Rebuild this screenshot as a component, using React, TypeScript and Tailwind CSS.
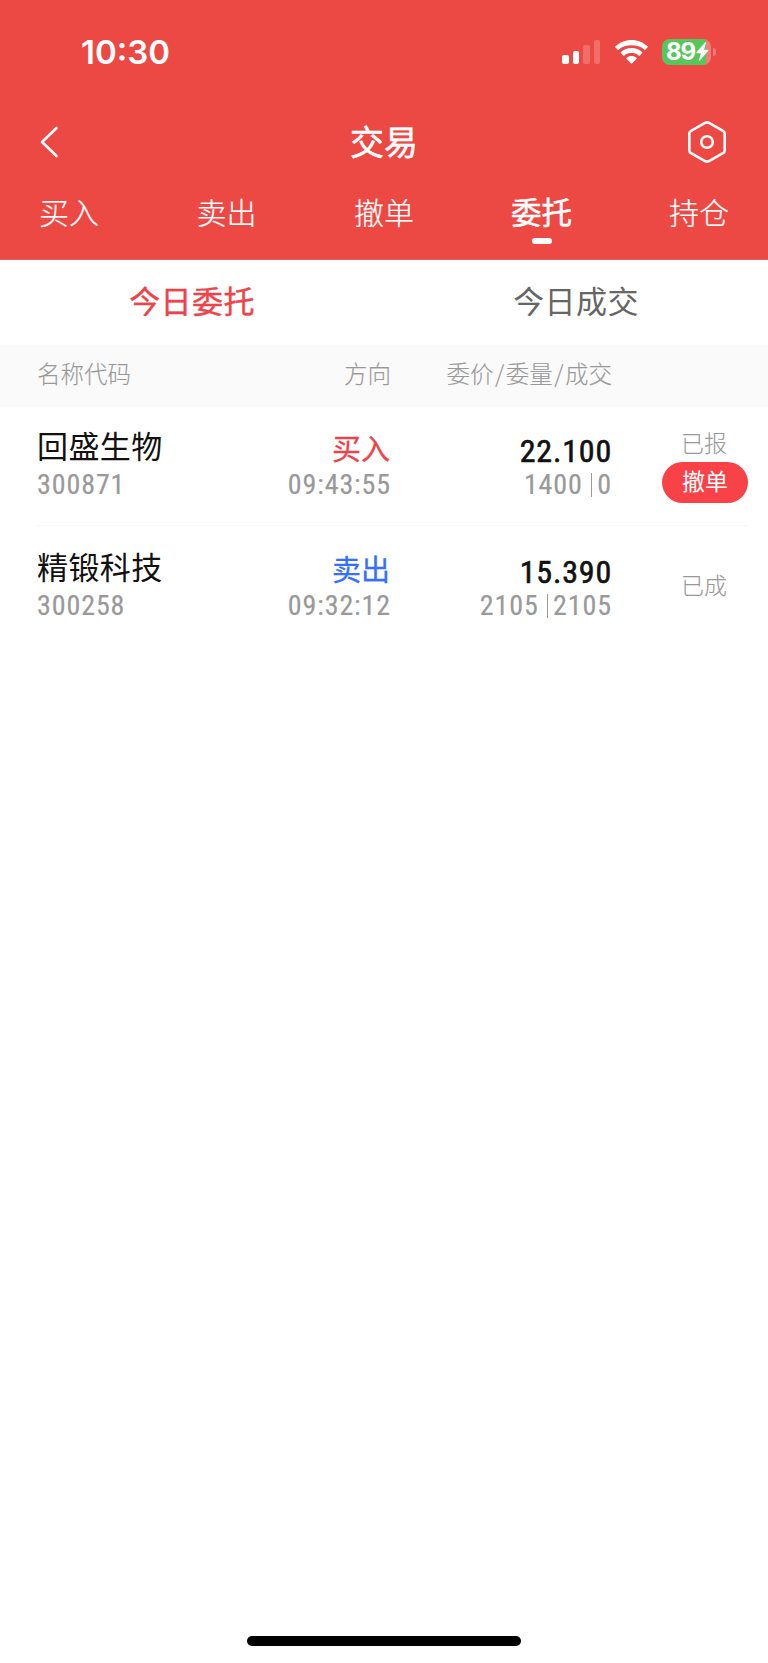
import React, { useState } from 'react';

const orders = [
  { name: '回盛生物', code: '300871', side: 'buy', time: '09:43:55', price: '22.100', amount: '1400', filled: '0', status: '已报', cancelable: true },
  { name: '精锻科技', code: '300258', side: 'sell', time: '09:32:12', price: '15.390', amount: '2105', filled: '2105', status: '已成', cancelable: false },
];

const tabs = ['买入', '卖出', '撤单', '委托', '持仓'];

// Condensed grey digits shared by the second line of each column
const digits = "font-['Roboto_Condensed',Roboto,sans-serif] text-[28px] leading-[34px] tracking-[0.9px] text-[#999] [-webkit-text-stroke:0.2px]";

const StatusBar: React.FC = () => (
  <div className="flex h-[103px] items-center justify-between pl-[81px] pr-[52px]">
    <div className="pt-px font-[Inter,sans-serif] text-[33px] leading-none font-semibold">10:30</div>
    <div className="flex items-center">
      {/* Signal */}
      <div className="flex h-6 items-end gap-[4px]">
        <div className="h-[9px] w-[6.5px] rounded-[2px] bg-white" />
        <div className="h-[13px] w-[6.5px] rounded-[2px] bg-white" />
        <div className="h-[19px] w-[6.5px] rounded-[2px] bg-white/20" />
        <div className="h-6 w-[6.5px] rounded-[2px] bg-white/20" />
      </div>
      {/* Wifi */}
      <svg className="ml-[15px] h-6 w-[33px]" viewBox="0 0 33 24" fill="#fff">
        <path d="M16.500 0C10.300 0 4.700 2.400.5 6.300c-.4.400-.4.900 0 1.300l2 2c.4.400.9.400 1.300 0 3.400-3.100 7.900-4.300 12.700-4.300s9.300 1.200 12.700 4.300c.4.400.9.400 1.300 0l2-2c.4-.4.400-.9 0-1.300C28.300 2.400 22.700 0 16.500 0z" />
        <path d="M16.500 8c-4 0-7.700 1.500-10.500 4-.4.400-.4.900 0 1.300l2.100 2.100c.4.400.9.400 1.300 0 1.900-1.700 4.400-2.300 7.100-2.300s5.200.6 7.100 2.300c.4.400.9.400 1.300 0l2.100-2.100c.4-.4.400-.9 0-1.300-2.800-2.500-6.500-4-10.500-4z" />
        <path d="M16.500 16c-1.900 0-3.600.6-4.900 1.700-.4.400-.4.900 0 1.300l4.200 4.300c.4.400 1 .4 1.400 0l4.200-4.300c.4-.4.400-.9 0-1.300-1.300-1.100-3-1.700-4.900-1.700z" />
      </svg>
      {/* Battery */}
      <div className="ml-[14px] flex h-[26px] w-[49px] items-center rounded-[8px] bg-linear-to-r from-[#56c85b] from-90% to-[#f27c79] to-90% pl-[4px]">
        <span className="font-[Inter,sans-serif] text-[24px] leading-none font-bold tracking-[-1px]">89</span>
        <svg className="ml-px h-[19px] w-[13px] shrink-0" viewBox="0 0 13 19" fill="#fff">
          <path d="M9 .5.500 10.200c-.4.500-.2 1 .5 1h3.900L2.900 18c-.2.800.4 1.100.9.500l8.500-9.700c.4-.5.200-1-.5-1H8l2-6.800C10.200.200 9.500-.1 9 .500z" />
        </svg>
      </div>
      <div className="ml-[2px] h-[8px] w-[3px] rounded-r-full bg-white/25" />
    </div>
  </div>
);

const App: React.FC = () => {
  const [activeTab, setActiveTab] = useState('委托');
  const [view, setView] = useState('orders');

  return (
    <div className="flex h-[1663px] w-[768px] flex-col bg-white font-['Noto_Sans_CJK_SC',sans-serif]">
      {/* Header */}
      <header className="h-[260px] border-b border-[#d9605b] bg-[#ed4944] text-white">
        <StatusBar />
        <div className="flex h-[78px] items-center justify-between pr-[42px] pl-[40px]">
          <svg className="h-8 w-[38px]" viewBox="0 0 38 32" fill="none" stroke="#fff" strokeWidth="2.600" strokeLinecap="round" strokeLinejoin="round">
            <path d="M16.500 2 2 16l14.500 14" />
          </svg>
          <h1 className="-mt-[2px] pl-[2px] text-[34px] leading-none [-webkit-text-stroke:0.5px]">交易</h1>
          <svg className="h-[42px] w-[38px]" viewBox="0 0 38 42" fill="none" stroke="#fff" strokeWidth="2.600" strokeLinejoin="round">
            <path d="M17 1.900q2-1.100 4 0l14 7.900q1.700 1 1.700 3v16.400q0 2-1.700 3l-14 7.900q-2 1.100-4 0L3 32.200q-1.700-1-1.700-3V12.800q0-2 1.700-3z" />
            <circle cx="19" cy="21" r="5.800" />
          </svg>
        </div>
        <nav className="flex justify-between px-[38px]">
          {tabs.map((tab) => (
            <button key={tab} onClick={() => setActiveTab(tab)} className="flex w-[62px] flex-col items-center">
              <span
                className={
                  activeTab === tab
                    ? 'text-[30.5px] leading-[61px] [-webkit-text-stroke:0.5px]'
                    : 'text-[30px] leading-[61px] font-light [-webkit-text-stroke:0.2px]'
                }
              >
                {tab}
              </span>
              {activeTab === tab && <span className="-mt-[4px] h-[6px] w-5 rounded-full bg-white" />}
            </button>
          ))}
        </nav>
      </header>

      {/* Sub tabs */}
      <div className="grid h-[85px] grid-cols-2 text-[31px] tracking-[0.4px]">
        <button onClick={() => setView('orders')} className={view === 'orders' ? 'pb-[4px] text-[#ee434a] [-webkit-text-stroke:0.4px]' : 'pb-[4px] text-[#666]'}>今日委托</button>
        <button onClick={() => setView('deals')} className={view === 'deals' ? 'pb-[4px] text-[#ee434a] [-webkit-text-stroke:0.4px]' : 'pb-[4px] text-[#666]'}>今日成交</button>
      </div>

      {/* Column titles */}
      <div className="flex h-[62px] bg-[#fafafa] pl-[37px] text-[23.500px] leading-[56px] font-light text-[#999] [-webkit-text-stroke:0.1px]">
        <div className="w-[200px]">名称代码</div>
        <div className="w-[154px] text-right">方向</div>
        <div className="w-[221px] text-right">
          委价<span className="mx-[1.500px]">/</span>委量<span className="mx-[1.500px]">/</span>成交
        </div>
      </div>

      {/* Orders List */}
      <div className="pr-[20px] pl-[37px]">
        {orders.map((order, index) => (
          <div key={order.code} className={index === 0 ? 'flex h-[119px] border-b border-[#f7f7f7]' : 'mt-[2px] flex h-[119px]'}>
            <div className="w-[200px] pt-[15px]">
              <div className="h-[46px] text-[31px] leading-[46px] tracking-[0.4px] text-[#111]">{order.name}</div>
              <div className={digits}>{order.code}</div>
            </div>
            <div className="w-[154px] pt-[15px] text-right">
              <div
                className={
                  order.side === 'buy'
                    ? 'h-[46px] pr-px text-[29px] leading-[50px] text-[#ee434a] [-webkit-text-stroke:0.3px]'
                    : 'h-[46px] pr-px text-[29px] leading-[51px] text-[#3370ff] [-webkit-text-stroke:0.3px]'
                }
              >
                {order.side === 'buy' ? '买入' : '卖出'}
              </div>
              <div className={digits}>{order.time}</div>
            </div>
            <div className="w-[221px] pt-[15px] text-right">
              <div className="h-[46px] font-['Roboto_Condensed',Roboto,sans-serif] text-[32px] leading-[59px] tracking-[0.8px] text-[#111] [-webkit-text-stroke:0.6px]">{order.price}</div>
              <div className="flex items-center justify-end">
                <span className={digits}>{order.amount}</span>
                <span className="mr-[5px] ml-[8px] h-6 w-[1.500px] bg-[#999]" />
                <span className={digits}>{order.filled}</span>
              </div>
            </div>
            <div className="flex flex-1 flex-col items-end">
              <div
                className={
                  order.cancelable
                    ? 'h-[55px] w-[88px] pt-[17px] text-center text-[23px] leading-[36px] font-light text-[#999] [-webkit-text-stroke:0.1px]'
                    : 'w-[88px] pt-[38px] text-center text-[23px] leading-[36px] font-light text-[#999] [-webkit-text-stroke:0.1px]'
                }
              >
                {order.status}
              </div>
              {order.cancelable && (
                <button className="h-[41px] w-[86px] rounded-full bg-[#f84248] pb-[5px] text-[23px] leading-[36px] text-white">撤单</button>
              )}
            </div>
          </div>
        ))}
      </div>

      {/* Home indicator */}
      <div className="mt-auto mb-[17px] h-[10px] w-[274px] self-center rounded-full bg-black" />
    </div>
  );
};

export default App;
